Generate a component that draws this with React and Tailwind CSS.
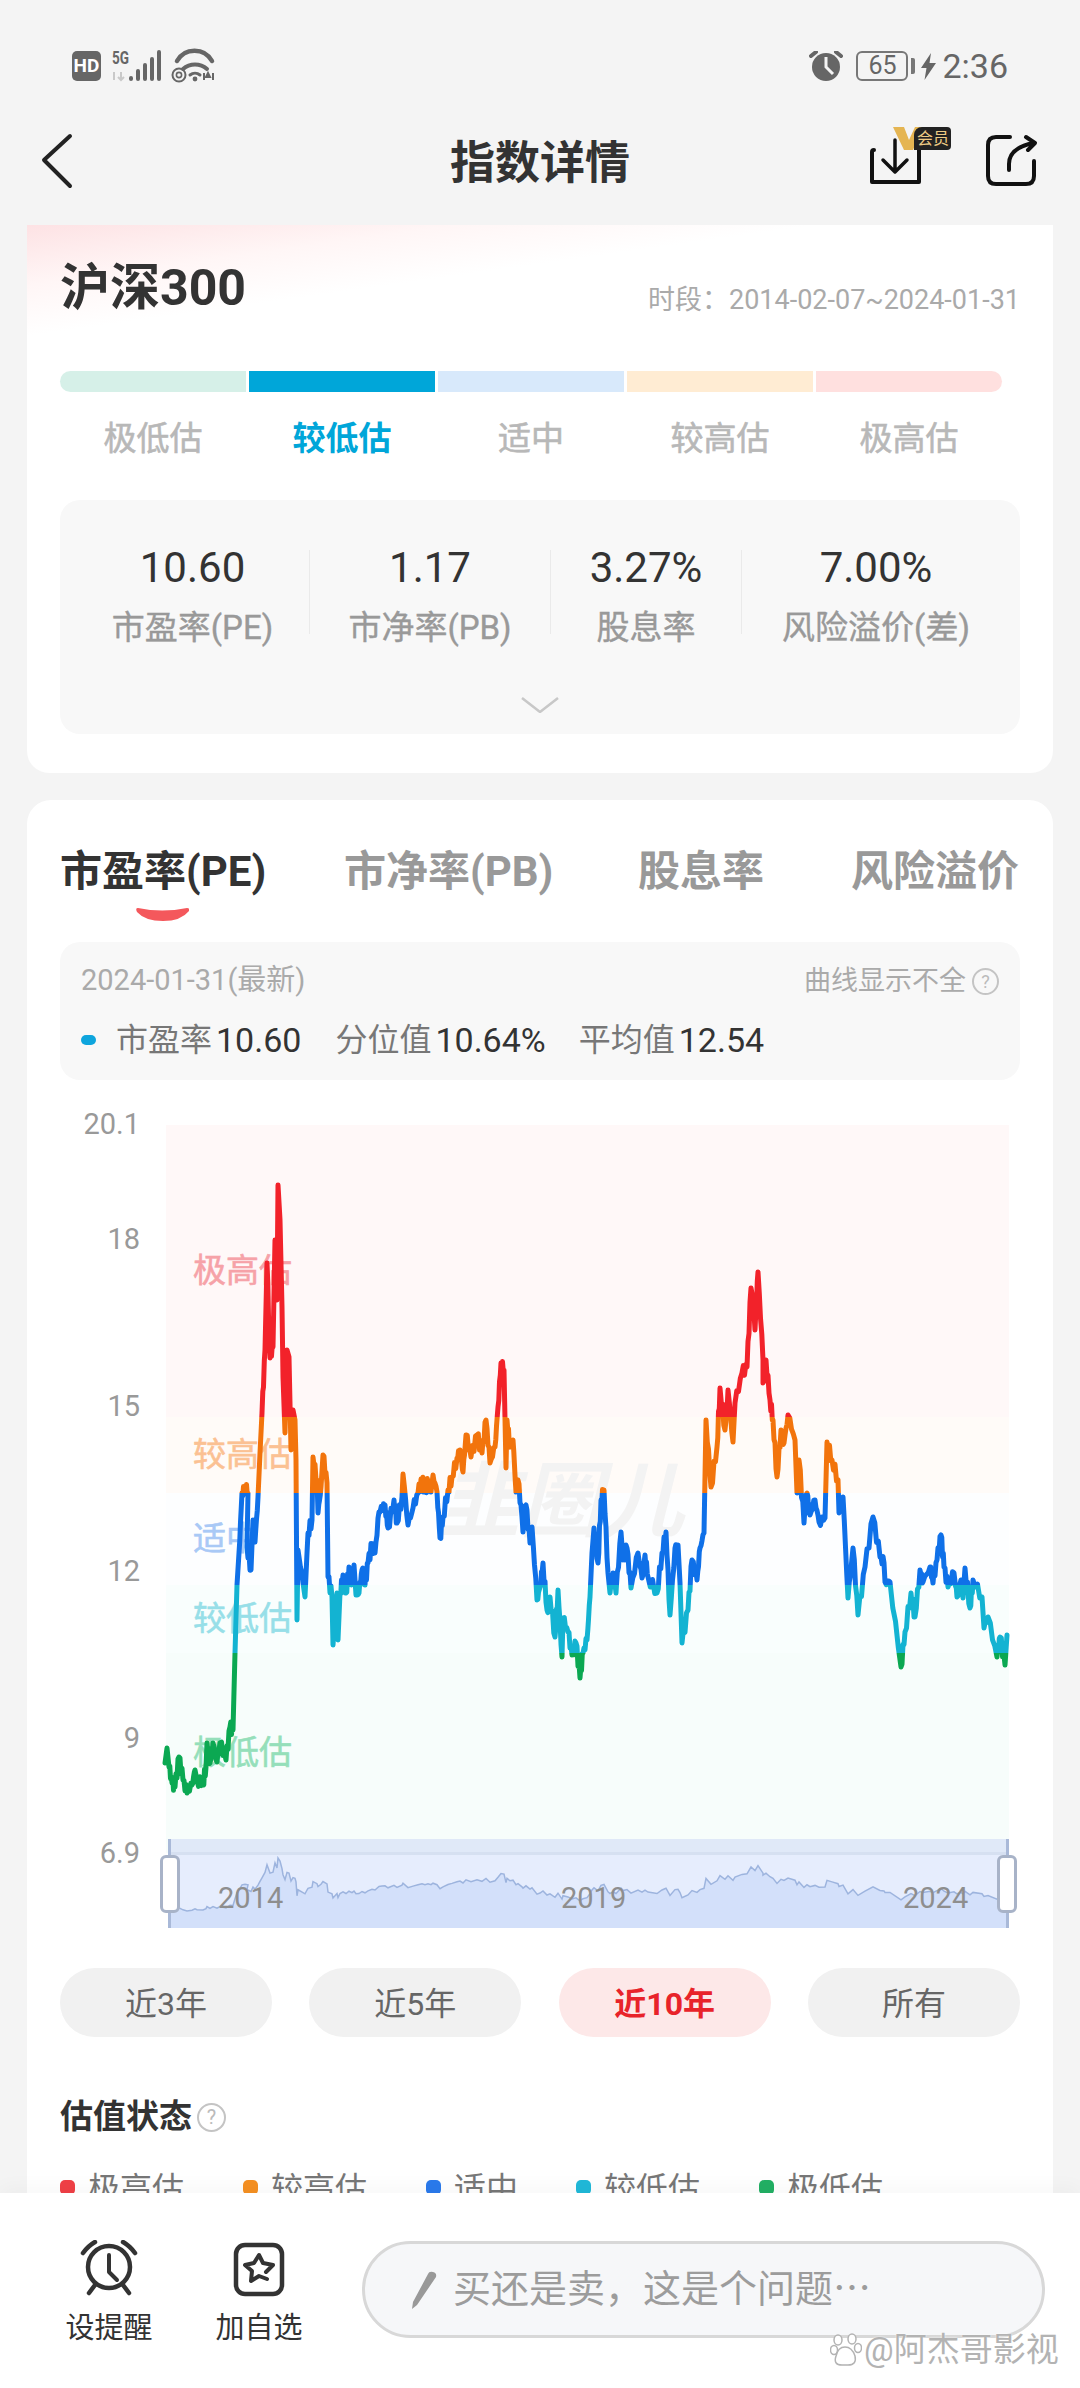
import React from 'react';

// traced from the PE curve, page coordinates
const curve = [
  [165,1763],[167,1748],[169,1767],[172,1783],[175,1787],[179,1757],[183,1780],[187,1793],[192,1785],[195,1770],[197,1780],[203,1783],[206,1767],[207,1743],[210,1763],[213,1743],[217,1762],[220,1743],[226,1760],[230,1727],[233,1730],[235,1653],
  [237,1585],[239,1553],[242,1493],[245,1486],[248,1493],[247,1547],[251,1570],[253,1520],[255,1542],[258,1497],[260,1453],[262,1413],[265,1350],[267,1263],[270,1358],[273,1347],[275,1240],[277,1300],[278,1185],[280,1220],[282,1307],[283,1377],[285,1433],[287,1350],[289,1357],[291,1450],[293,1410],[295,1420],[296,1460],[297,1620],
  [298,1550],[303,1583],[305,1597],[307,1553],[308,1533],[312,1520],[313,1457],[317,1480],[318,1513],[321,1487],[323,1455],[327,1483],[328,1577],[332,1597],[333,1645],[337,1593],[338,1640],[340,1593],[343,1575],[346,1593],[349,1567],[352,1583],[354,1565],[356,1595],[359,1593],[362,1570],[365,1585],[368,1563],[372,1545],[375,1553],[379,1512],[382,1507],[385,1505],[388,1528],[394,1500],[397,1523],[402,1497],[403,1474],[408,1525],[413,1508],[418,1493],[422,1480],[425,1492],[428,1482],[431,1492],[433,1475],[437,1492],[440,1538],[443,1517],[448,1490],[452,1477],[457,1458],[460,1450],[463,1472],[466,1435],[471,1457],[477,1435],[482,1453],[486,1420],[490,1463],[495,1447],[498,1407],[501,1363],[504,1370],[506,1468],[507,1420],[510,1447],[513,1440],[516,1492],[518,1480],[522,1517],[523,1532],[526,1505],[530,1543],[532,1527],[537,1600],
  [540,1587],[543,1563],[547,1610],[550,1597],[555,1637],[558,1590],[562,1657],[563,1618],[568,1632],[572,1655],[576,1643],[580,1678],[583,1653],[587,1640],[590,1597],[592,1553],[594,1528],[598,1563],[601,1500],[604,1490],[608,1573],[610,1593],[613,1573],[616,1593],[621,1532],[623,1560],[627,1548],[631,1588],[638,1553],[642,1578],[645,1555],[648,1577],[657,1593],[662,1553],[666,1532],[670,1615],[675,1548],[678,1545],[680,1583],[682,1643],[688,1610],[692,1560],[697,1580],[700,1548],[704,1533],[706,1420],[711,1487],[717,1447],[720,1388],[725,1430],[728,1390],[733,1442],[735,1403],[742,1373],[747,1367],[751,1288],[755,1330],[758,1272],[763,1360],[763,1383],[766,1360],[770,1400],[773,1420],[777,1477],[781,1430],[784,1443],[788,1415],[795,1440],[797,1493],[799,1460],[804,1523],[807,1493],[810,1515],[815,1500],[819,1522],[825,1518],[827,1442],[832,1460],[838,1480],[839,1513],[843,1497],[848,1598],[853,1548],[858,1615],[865,1567],[873,1517],[880,1557],[884,1563],[885,1582],[890,1582],[901,1667],[905,1632],[911,1593],[915,1617],[920,1570],[923,1582],[930,1567],[933,1583],[937,1560],[941,1535],[944,1567],[948,1587],[954,1573],[957,1597],[961,1580],[963,1598],[965,1568],[970,1608],[973,1580],[982,1597],[984,1628],[988,1617],[997,1657],[1000,1637],[1005,1665],[1007,1635],
];

// the real series is daily, so add some small wobble between the traced points
const dense = [];
curve.forEach(([x, y], i) => {
  dense.push(`${x},${y}`);
  const next = curve[i + 1];
  if (!next || next[0] - x < 3) return;
  for (let k = 1; k <= 3; k++) {
    const t = k / 4;
    const wobble = 6 * Math.sin((i + 1) * 12.9898 + k * 78.233);
    dense.push(`${(x + (next[0] - x) * t).toFixed(1)},${(y + (next[1] - y) * t + wobble).toFixed(1)}`);
  }
});
const curvePoints = dense.join(' ');

// the overview in the slider is the same curve, squashed
const miniPoints = curve.map(([x, y]) => `${x},${(1858 + (y - 1185) * 0.087).toFixed(1)}`);
const miniArea = `170,1928 ${miniPoints.join(' ')} 1008,1928`;
const miniLine = miniPoints.join(' ');

const zones = [
  { id: 'z-red', y: 1120, h: 297, color: '#f2222a' },
  { id: 'z-orange', y: 1417, h: 76, color: '#f2740c' },
  { id: 'z-blue', y: 1493, h: 92, color: '#0f70e8' },
  { id: 'z-cyan', y: 1585, h: 68, color: '#13b3d2' },
  { id: 'z-green', y: 1653, h: 200, color: '#0ba852' },
];

const bands = [
  { name: '极高估', box: 'h-[292px] bg-[#fff8f8]', text: 'text-[#f6a2a8]' },
  { name: '较高估', box: 'h-[76px] bg-[#fffbf8]', text: 'text-[#fbc193]' },
  { name: '适中', box: 'h-[92px] bg-[#fdfeff]', text: 'text-[#a9c9f6]' },
  { name: '较低估', box: 'h-[68px] bg-[#f9fefd]', text: 'text-[#97dfe8]' },
  { name: '极低估', box: 'h-[200px] bg-[#f7fdfb]', text: 'text-[#95dfba]' },
];

const axis = [
  { label: '20.1', pos: 'top-[-1px]' },
  { label: '18', pos: 'top-[114px]' },
  { label: '15', pos: 'top-[281px]' },
  { label: '12', pos: 'top-[446px]' },
  { label: '9', pos: 'top-[613px]' },
  { label: '6.9', pos: 'top-[728px]' },
];

const scale = [
  { name: '极低估', bar: 'bg-[#d6f0e8] rounded-l-full' },
  { name: '较低估', bar: 'bg-[#00a6d9]', active: true },
  { name: '适中', bar: 'bg-[#d8e9fb]' },
  { name: '较高估', bar: 'bg-[#ffecd3]' },
  { name: '极高估', bar: 'bg-[#ffe0df] rounded-r-full' },
];

const stats = [
  { value: '10.60', label: '市盈率(PE)', box: 'w-[250px] pl-4 border-r' },
  { value: '1.17', label: '市净率(PB)', box: 'w-[241px] border-r' },
  { value: '3.27%', label: '股息率', box: 'w-[191px] border-r' },
  { value: '7.00%', label: '风险溢价(差)', box: 'flex-1 pr-[10px]' },
];

const ranges = [
  { label: '近3年' },
  { label: '近5年' },
  { label: '近10年', active: true },
  { label: '所有' },
];

const legend = [
  { name: '极高估', dot: 'bg-[#f04046]', w: 'w-[183px]' },
  { name: '较高估', dot: 'bg-[#f59022]', w: 'w-[183px]' },
  { name: '适中', dot: 'bg-[#2a7aec]', w: 'w-[150px]' },
  { name: '较低估', dot: 'bg-[#20b9d9]', w: 'w-[183px]' },
  { name: '极低估', dot: 'bg-[#22b064]', w: 'w-[130px]' },
];

const Help = ({ className }) => (
  <span className={`flex items-center justify-center rounded-full border-2 border-[#c4c4c4] text-[#bbb] ${className}`}>?</span>
);

const StatusBar = () => (
  <div className="h-[100px] shrink-0 flex items-start justify-between pl-[72px] pr-[72px] pt-[51px] text-[#666]">
    <div className="flex items-start">
      <span className="w-[29px] h-[30px] rounded-[5px] bg-[#666] text-white text-[19px] font-bold leading-[30px] text-center">HD</span>
      <svg width="116" height="38" viewBox="100 46 116 38" className="ml-[-1px] mt-[-5px]">
        <text x="112" y="64" fontSize="19" fontWeight="700" fill="#666" textLength="17" lengthAdjust="spacingAndGlyphs">5G</text>
        <path d="M114 72v8M121 72v8M118 77l3 3 3-3" stroke="#c9c9c9" strokeWidth="2" fill="none" />
        <g stroke="#666" strokeWidth="4" strokeLinecap="round">
          <path d="M131 78v1M138 71v8M145 65v14M152 59v20M159 52v27" />
        </g>
        <path d="M177 61A20 20 0 0 1 212 61" stroke="#666" strokeWidth="4.5" fill="none" strokeLinecap="round" />
        <path d="M183 69A18 18 0 0 1 207 69" stroke="#666" strokeWidth="4" fill="none" strokeLinecap="round" />
        <path d="M190 75A8 8 0 0 1 200 75" stroke="#666" strokeWidth="3" fill="none" strokeLinecap="round" />
        <circle cx="195" cy="79" r="2.4" fill="#666" />
        <circle cx="179" cy="75" r="6.5" stroke="#666" strokeWidth="2" fill="none" />
        <circle cx="179" cy="75" r="2.6" stroke="#666" strokeWidth="1.6" fill="none" />
        <path d="M204 73v7M208 73l-2 4h4zM213 73v7" stroke="#666" strokeWidth="2" fill="none" />
      </svg>
    </div>
    <div className="flex items-start">
      <svg width="36" height="32" viewBox="810 50 36 32">
        <circle cx="827" cy="66" r="14" fill="#666" />
        <path d="M827 56v10l7 7" stroke="#f4f4f4" strokeWidth="3" fill="none" />
        <path d="M812 55l5-4M842 55l-5-4" stroke="#666" strokeWidth="4" strokeLinecap="round" />
      </svg>
      <span className="ml-[11px] w-[52px] h-[30px] rounded-[6px] border-[2.5px] border-[#777] text-[25px] leading-[25px] text-center">65</span>
      <span className="ml-[3px] mt-[7px] w-[4px] h-[16px] rounded-r-[2px] bg-[#777]" />
      <svg width="15" height="27" viewBox="0 0 15 27" className="ml-[6px] mt-[2px]">
        <path d="M10 0L0 15h5.5L3.5 27 15 10H8.5z" fill="#666" />
      </svg>
      <span className="ml-[6px] text-[34px] leading-[30px]">2:36</span>
    </div>
  </div>
);

const NavBar = () => (
  <div className="relative h-[125px] shrink-0 flex items-center justify-center pt-[2px]">
    <svg width="34" height="56" viewBox="0 0 34 56" className="absolute left-[40px] top-[33px]">
      <path d="M30 3L4 27l26 26" stroke="#222" strokeWidth="4" fill="none" strokeLinecap="round" strokeLinejoin="round" />
    </svg>
    <h1 className="text-[45px] font-bold text-[#333]">指数详情</h1>
    <svg width="56" height="50" viewBox="870 138 56 50" className="absolute left-[868px] top-[38px]">
      <path d="M876 150q-2 0-2 2v30h47v-36" stroke="#111" strokeWidth="4" fill="none" strokeLinecap="round" strokeLinejoin="round" />
      <path d="M897 140v31M885 160l12 12 12-12" stroke="#111" strokeWidth="3.5" fill="none" strokeLinecap="round" strokeLinejoin="round" />
    </svg>
    <div className="absolute left-[893px] top-[27px] w-[58px] h-[23px] flex">
      <svg width="30" height="23" viewBox="0 0 30 23" className="shrink-0">
        <path d="M0 0h11l5 13 6-13h8l-10 23h-9z" fill="#e5b552" />
      </svg>
      <span className="ml-[-9px] flex-1 rounded-r-[4px] rounded-tl-[8px] bg-[#222] text-[#eecb84] text-[16px] leading-[23px] text-right pr-[2px]">会员</span>
    </div>
    <svg width="56" height="56" viewBox="985 134 56 56" className="absolute left-[983px] top-[34px]">
      <path d="M1012 137h-14q-8 0-8 8v31q0 8 8 8h30q8 0 8-8v-15" stroke="#111" strokeWidth="4" fill="none" strokeLinecap="round" />
      <path d="M1011 170v-6q0-16 24-21M1028 137l9 6-7 7" stroke="#111" strokeWidth="4" fill="none" strokeLinecap="round" strokeLinejoin="round" />
    </svg>
  </div>
);

const SummaryCard = () => (
  <section className="rounded-b-[22px] px-[33px] pt-[38px] pb-[39px] bg-[linear-gradient(172deg,#fde2e4_0px,#fff6f6_60px,#ffffff_110px)]">
    <div className="flex items-center justify-between h-[50px]">
      <h2 className="text-[50px] font-bold leading-[50px] text-[#333]">沪深300</h2>
      <span className="mt-[24px] text-[27px] text-[#aaa]">{'时段\uFF1A2014-02-07~2024-01-31'}</span>
    </div>
    <div className="mt-[58px] w-[942px] flex gap-[3px]">
      {scale.map((s) => (
        <div key={s.name} className={`flex-1 h-[21px] ${s.bar}`} />
      ))}
    </div>
    <div className="mt-[30px] w-[942px] flex gap-[3px]">
      {scale.map((s) => (
        <span key={s.name} className={`flex-1 text-center text-[33px] leading-[34px] ${s.active ? 'text-[#00a6d9] font-bold' : 'text-[#b8b8b8] [-webkit-text-stroke:0.6px_#b8b8b8]'}`}>
          {s.name}
        </span>
      ))}
    </div>
    <div className="mt-[44px] h-[234px] rounded-[20px] bg-[#f8f8f8] pt-[50px] flex flex-col">
      <div className="flex">
        {stats.map((s) => (
          <div key={s.label} className={`h-[84px] flex flex-col items-center border-[#eaeaea] ${s.box}`}>
            <span className="text-[42px] leading-[36px] text-[#333]">{s.value}</span>
            <span className="mt-[22px] text-[33px] leading-[40px] text-[#999] [-webkit-text-stroke:0.4px_#999] whitespace-nowrap">{s.label}</span>
          </div>
        ))}
      </div>
      <svg width="38" height="16" viewBox="0 0 38 16" className="mt-[63px] self-center">
        <path d="M1 1l18 14L37 1" stroke="#c8c8c8" strokeWidth="2.5" fill="none" />
      </svg>
    </div>
  </section>
);

const PeChart = () => (
  <div className="relative h-[830px] mt-[30px]">
    <div className="pl-[106px] pr-[11px] pt-[15px] flex flex-col">
      {bands.map((b) => (
        <div key={b.name} className={`shrink-0 flex items-center pl-[27px] ${b.box}`}>
          <span className={`text-[33px] [-webkit-text-stroke:0.6px_currentColor] ${b.text}`}>{b.name}</span>
        </div>
      ))}
    </div>
    <div className="absolute inset-0 overflow-hidden">
      {/* watermark */}
      <span className="absolute left-[378px] top-[347px] text-[82px] leading-[90px] font-bold italic text-[#f3f3f3]">韭圈儿</span>
    </div>
    {axis.map((a) => (
      <span key={a.label} className={`absolute left-0 w-[80px] text-right text-[29px] leading-[30px] text-[#999] ${a.pos}`}>
        {a.label}
      </span>
    ))}
    <svg width="960" height="830" viewBox="60 1110 960 830" className="absolute left-0 top-0">
      <defs>
        {zones.map((z) => (
          <clipPath key={z.id} id={z.id}>
            <rect x="160" y={z.y} width="860" height={z.h} />
          </clipPath>
        ))}
      </defs>
      {zones.map((z) => (
        <polyline key={z.id} points={curvePoints} clipPath={`url(#${z.id})`} fill="none" stroke={z.color} strokeWidth="5" strokeLinejoin="round" strokeLinecap="round" />
      ))}
    </svg>
    {/* range slider */}
    <div className="absolute left-[108px] right-[11px] top-[729px] h-[89px] bg-[#e6edfd]">
      <div className="h-[16px] bg-[#e0e9f8] border-b-[3px] border-[#d6e0f1]" />
      <svg width="840" height="89" viewBox="168 1839 840 89" className="absolute left-0 top-0">
        <polygon points={miniArea} fill="#d3e0fa" />
        <polyline points={miniLine} fill="none" stroke="#9db4de" strokeWidth="1.5" />
      </svg>
      <span className="absolute left-[50px] top-[44px] text-[29px] leading-[30px] text-[#8e8e8e]">2014</span>
      <span className="absolute left-[393px] top-[44px] text-[29px] leading-[30px] text-[#8e8e8e]">2019</span>
      <span className="absolute left-[735px] top-[44px] text-[29px] leading-[30px] text-[#8e8e8e]">2024</span>
      <div className="absolute left-0 top-0 bottom-0 w-[3px] bg-[#a9b9d8]" />
      <div className="absolute right-0 top-0 bottom-0 w-[3px] bg-[#a9b9d8]" />
      <div className="absolute left-[-8px] top-[16px] w-[20px] h-[58px] rounded-[6px] bg-white border-[3px] border-[#a8b3c8]" />
      <div className="absolute right-[-8px] top-[16px] w-[20px] h-[58px] rounded-[6px] bg-white border-[3px] border-[#a8b3c8]" />
    </div>
  </div>
);

const DetailCard = () => (
  <section className="mt-[27px] rounded-t-[24px] bg-white px-[33px] pt-[47px]">
    <div className="flex text-[42px] leading-[50px] font-bold text-[#999] whitespace-nowrap">
      <span className="w-[284px] text-[#333]">市盈率(PE)</span>
      <span className="w-[294px]">市净率(PB)</span>
      <span className="w-[213px]">股息率</span>
      <span>风险溢价</span>
    </div>
    <svg width="53" height="13" viewBox="0 0 53 13" className="ml-[76px] mt-[11px] block">
      <path d="M2 0q24 5 49 0q3 0 2 3q-8 10-26 10Q9 13 1 4Q-1 0 2 0z" fill="#f4585c" />
    </svg>
    <div className="mt-[21px] h-[138px] rounded-[20px] bg-[#f8f8f8] px-[21px] pt-[23px]">
      <div className="flex items-center justify-between h-[32px] text-[#aaa]">
        <span className="text-[29px]">2024-01-31(最新)</span>
        <div className="flex items-center gap-[6px]">
          <span className="text-[27px]">曲线显示不全</span>
          <Help className="w-[27px] h-[27px] text-[18px]" />
        </div>
      </div>
      <div className="mt-[27px] flex items-center h-[32px] text-[32px] text-[#777] whitespace-nowrap">
        <span className="w-[15px] h-[10px] rounded-full bg-[#0ea5dd] mr-[20px]" />
        <span>市盈率</span>
        <span className="ml-[4px] text-[34px] text-[#333]">10.60</span>
        <span className="ml-[34px]">分位值</span>
        <span className="ml-[4px] text-[34px] text-[#333]">10.64%</span>
        <span className="ml-[33px]">平均值</span>
        <span className="ml-[4px] text-[34px] text-[#333]">12.54</span>
      </div>
    </div>
    <PeChart />
    <div className="mt-[28px] flex justify-between">
      {ranges.map((r) => (
        <button
          key={r.label}
          className={`w-[212px] h-[69px] pt-[2px] rounded-full text-[32px] ${r.active ? 'bg-[#fde8e8] text-[#e8232a] font-bold' : 'bg-[#f1f1f1] text-[#666]'}`}
        >
          {r.label}
        </button>
      ))}
    </div>
    <div className="mt-[64px] h-[32px] flex items-center gap-[5px]">
      <span className="text-[33px] font-bold text-[#333]">估值状态</span>
      <Help className="w-[29px] h-[29px] text-[20px]" />
    </div>
    <div className="mt-[34px] flex">
      {legend.map((l) => (
        <div key={l.name} className={`flex items-center gap-[13px] ${l.w}`}>
          <span className={`w-[15px] h-[15px] mb-[4px] rounded-[5px] ${l.dot}`} />
          <span className="text-[32px] leading-[44px] text-[#777]">{l.name}</span>
        </div>
      ))}
    </div>
  </section>
);

const BottomBar = () => (
  <div className="relative z-10 h-[195px] shrink-0 bg-white shadow-[0_-6px_18px_rgba(0,0,0,0.03)] flex items-start pt-[47px]">
    <div className="w-[90px] ml-[64px] flex flex-col items-center">
      <svg width="62" height="58" viewBox="78 2240 62 58">
        <circle cx="109" cy="2267" r="21" stroke="#333" strokeWidth="4.5" fill="none" />
        <path d="M109 2255v17l8 8" stroke="#333" strokeWidth="4" fill="none" strokeLinecap="round" strokeLinejoin="round" />
        <path d="M83 2253q5-7 12-11M135 2253q-5-7-12-11M89 2293l6-8M129 2293l-6-8" stroke="#333" strokeWidth="4.5" fill="none" strokeLinecap="round" />
      </svg>
      <span className="mt-[13px] text-[29px] leading-[34px] text-[#333] whitespace-nowrap">设提醒</span>
    </div>
    <div className="w-[90px] ml-[60px] flex flex-col items-center">
      <svg width="54" height="56" viewBox="233 2240 54 56" className="mt-[1px]">
        <rect x="237" y="2244" width="46" height="49" rx="9" stroke="#333" strokeWidth="4.5" fill="none" />
        <path d="M268 2278l-8-3-8 5 1-10-7-6 9-2 5-8 4 8 10 2-7 7" stroke="#333" strokeWidth="4" fill="none" strokeLinecap="round" strokeLinejoin="round" />
      </svg>
      <span className="mt-[14px] text-[29px] leading-[34px] text-[#333] whitespace-nowrap">加自选</span>
    </div>
    <div className="ml-[58px] mt-[1px] w-[683px] h-[97px] rounded-full bg-[#f6f7f9] border-[3px] border-[#d8d8d8] flex items-center pl-[46px] box-border">
      <svg width="26" height="38" viewBox="0 0 26 38" className="shrink-0">
        <path d="M17 3q1-3 5-2t3 5L6 34l-5 4 1-7z" fill="#999" />
      </svg>
      <span className="ml-[16px] text-[38px] text-[#9c9c9c] whitespace-nowrap">{'买还是卖\uFF0C这是个问题\u22EF'}</span>
    </div>
  </div>
);

const App = () => (
  <div className="relative w-[1080px] h-[2388px] overflow-hidden bg-[#f4f4f4] flex flex-col font-[Roboto,'Noto_Sans_CJK_SC',sans-serif]">
    <StatusBar />
    <NavBar />
    <main className="flex-1 min-h-0 overflow-hidden px-[27px]">
      <SummaryCard />
      <DetailCard />
    </main>
    <BottomBar />
    {/* platform watermark */}
    <div className="absolute z-20 left-[830px] top-[2332px] flex items-center gap-[2px] text-[33px] leading-[36px] text-[#b3b3b3] [text-shadow:0_0_2px_#fff] whitespace-nowrap">
      <svg width="32" height="34" viewBox="0 0 32 34" className="shrink-0">
        <g fill="#fff" stroke="#b3b3b3" strokeWidth="1.5">
          <ellipse cx="8" cy="7" rx="4" ry="5" />
          <ellipse cx="22" cy="6" rx="4" ry="5" />
          <ellipse cx="4" cy="17" rx="3.5" ry="4.5" />
          <ellipse cx="28" cy="15" rx="3.5" ry="4.5" />
          <path d="M15 14q7 0 10 9 2 9-7 9h-6q-9 0-6-9 2-9 9-9z" />
        </g>
      </svg>
      <span>@阿杰哥影视</span>
    </div>
  </div>
);

export default App;
